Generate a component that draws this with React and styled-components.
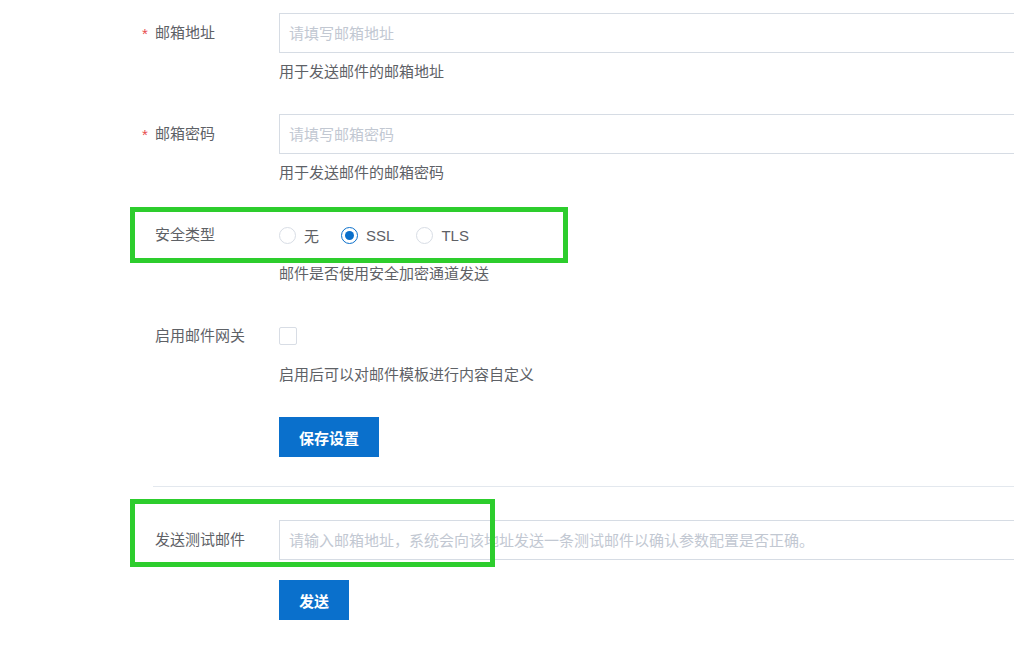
import React from "react";
import styled, { createGlobalStyle } from "styled-components";

const GlobalStyle = createGlobalStyle`
  html, body {
    margin: 0;
    padding: 0;
    background: #fff;
    overflow: hidden;
  }
  body {
    font-family: "Liberation Sans", "Noto Sans CJK SC", sans-serif;
    font-size: 15px;
    color: #5e6166;
  }
`;

const Page = styled.div`
  position: relative;
  width: 1014px;
  height: 668px;
  padding: 13px 0 0 155px;
  box-sizing: border-box;
`;

const FormItem = styled.div`
  display: grid;
  grid-template-columns: 124px 780px;
  margin-top: ${(p) => p.$top || 0}px;
  margin-bottom: ${(p) => (p.$last ? "0" : "32px")};
`;

const Label = styled.label`
  position: relative;
  height: 40px;
  line-height: 40px;
  color: #5e6166;
  white-space: nowrap;

  ${(p) =>
    p.$required &&
    `
    &::before {
      content: "*";
      position: absolute;
      left: -13px;
      top: 1px;
      color: #e84c4c;
      font-size: 15px;
    }
  `}
`;

const Control = styled.div`
  display: flex;
  align-items: center;
  height: 40px;
`;

const Input = styled.input`
  width: 100%;
  height: 40px;
  box-sizing: border-box;
  border: 1px solid #d6dce4;
  border-radius: 0;
  padding: 0 9px;
  font-family: inherit;
  font-size: 15px;
  color: #333;
  outline: none;

  &::placeholder {
    color: #c2c8d2;
  }
`;

const Help = styled.div`
  grid-column: 2;
  margin-top: 9px;
  line-height: 20px;
  color: #5e6166;
`;

const RadioGroup = styled.div`
  display: flex;
  align-items: center;
  gap: 22px;
`;

const RadioOption = styled.label`
  display: flex;
  align-items: center;
  gap: 8px;
  color: #5e6166;
  cursor: pointer;
`;

const RadioCircle = styled.span`
  width: 17px;
  height: 17px;
  box-sizing: border-box;
  border-radius: 50%;
  border: 1px solid ${(p) => (p.$checked ? "#0a6fcb" : "#d8dde5")};
  display: flex;
  align-items: center;
  justify-content: center;

  &::after {
    content: "";
    width: 9px;
    height: 9px;
    border-radius: 50%;
    background: #0a6fcb;
    display: ${(p) => (p.$checked ? "block" : "none")};
  }
`;

const Checkbox = styled.span`
  width: 18px;
  height: 18px;
  box-sizing: border-box;
  border: 1px solid #d8dde5;
  border-radius: 2px;
`;

const PrimaryButton = styled.button`
  width: ${(p) => p.$width}px;
  height: 40px;
  border: none;
  border-radius: 0;
  background: #0a70cc;
  color: #fff;
  font-family: "Noto Sans CJK SC", sans-serif;
  font-weight: 700;
  font-size: 15px;
  cursor: pointer;
`;

const ButtonRow = styled.div`
  grid-column: 2;
`;

const Divider = styled.hr`
  margin: 29px 0 33px -2px;
  border: none;
  border-top: 1px solid #e3e8ee;
  width: 900px;
`;

const Highlight = styled.div`
  position: absolute;
  left: ${(p) => p.$x}px;
  top: ${(p) => p.$y}px;
  width: ${(p) => p.$w}px;
  height: ${(p) => p.$h}px;
  box-sizing: border-box;
  border: 5px solid #2dcd2d;
  pointer-events: none;
`;

const radios = [
  { key: "none", label: "无" },
  { key: "ssl", label: "SSL" },
  { key: "tls", label: "TLS" },
];

function App() {
  const security = "ssl";

  return (
    <>
      <GlobalStyle />
      <Page>
        <FormItem>
          <Label $required>邮箱地址</Label>
          <Control>
            <Input placeholder="请填写邮箱地址" />
          </Control>
          <Help>用于发送邮件的邮箱地址</Help>
        </FormItem>

        <FormItem>
          <Label $required>邮箱密码</Label>
          <Control>
            <Input type="text" placeholder="请填写邮箱密码" />
          </Control>
          <Help>用于发送邮件的邮箱密码</Help>
        </FormItem>

        <FormItem>
          <Label>安全类型</Label>
          <Control>
            <RadioGroup>
              {radios.map((r) => (
                <RadioOption key={r.key}>
                  <RadioCircle $checked={security === r.key} />
                  {r.label}
                </RadioOption>
              ))}
            </RadioGroup>
          </Control>
          <Help>邮件是否使用安全加密通道发送</Help>
        </FormItem>

        <FormItem>
          <Label>启用邮件网关</Label>
          <Control>
            <Checkbox />
          </Control>
          <Help>启用后可以对邮件模板进行内容自定义</Help>
        </FormItem>

        <FormItem $last>
          <ButtonRow>
            <PrimaryButton $width={100}>保存设置</PrimaryButton>
          </ButtonRow>
        </FormItem>

        <Divider />

        <FormItem $last>
          <Label>发送测试邮件</Label>
          <Control>
            <Input placeholder="请输入邮箱地址，系统会向该地址发送一条测试邮件以确认参数配置是否正确。" />
          </Control>
        </FormItem>
        <FormItem $last $top={20}>
          <ButtonRow>
            <PrimaryButton $width={70}>发送</PrimaryButton>
          </ButtonRow>
        </FormItem>

        <Highlight $x={130} $y={207} $w={438} $h={56} />
        <Highlight $x={130} $y={499} $w={365} $h={68} />
      </Page>
    </>
  );
}

export default App;
